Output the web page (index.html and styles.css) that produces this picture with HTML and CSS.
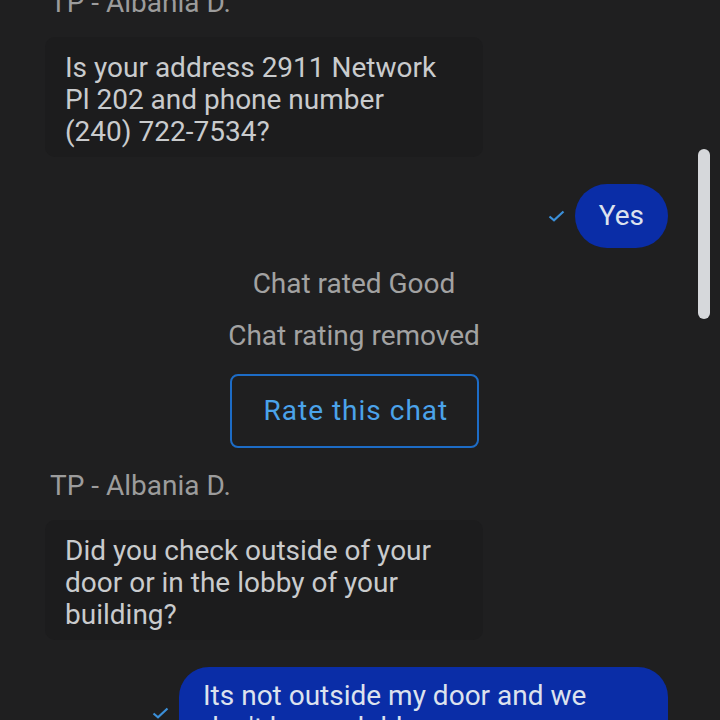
FILE: index.html
```html
<!DOCTYPE html>
<html lang="en">
<head>
<meta charset="utf-8">
<title>Chat</title>
<link rel="stylesheet" href="styles.css">
</head>
<body>
<div class="chat">
  <div class="name">TP - Albania D.</div>
  <div class="row agent"><div class="bubble-agent">Is your address 2911 Network Pl 202 and phone number (240) 722-7534?</div></div>
  <div class="row user first-user">
    <svg class="tick" width="17" height="12" viewBox="0 0 17 12"><polyline points="1.5,6.5 6,10.3 15.5,1.5" fill="none" stroke="#3b8fd8" stroke-width="2.2"/></svg>
    <div class="bubble-user short">Yes</div>
  </div>
  <div class="system rated">Chat rated Good</div>
  <div class="system removed">Chat rating removed</div>
  <div class="btn-row"><div class="rate-btn">Rate this chat</div></div>
  <div class="name name2">TP - Albania D.</div>
  <div class="row agent"><div class="bubble-agent">Did you check outside of your door or in the lobby of your building?</div></div>
  <div class="row user second-user">
    <svg class="tick" width="17" height="12" viewBox="0 0 17 12"><polyline points="1.5,6.5 6,10.3 15.5,1.5" fill="none" stroke="#3b8fd8" stroke-width="2.2"/></svg>
    <div class="bubble-user">Its not outside my door and we don't have a lobby</div>
  </div>
</div>
<div class="scrollbar"></div>
</body>
</html>
```
FILE: styles.css
```css
html, body {
  margin: 0;
  padding: 0;
  background: #1f1f20;
  height: 720px;
  overflow: hidden;
}
body {
  font-family: Roboto, "Liberation Sans", sans-serif;
  font-size: 28px;
  line-height: 32px;
  color: #c9cbcd;
  position: relative;
}
.chat {
  width: 708px;
  margin-top: -13px;
  display: flex;
  flex-direction: column;
}
.name {
  padding-left: 50px;
  color: #9c9c9c;
}
.name2 {
  margin-top: 22px;
}
.row {
  display: flex;
}
.agent {
  padding-left: 45px;
  margin-top: 18px;
}
.bubble-agent {
  width: 380px;
  background: #1c1c1d;
  border-radius: 10px;
  padding: 15px 38px 9px 20px;
  color: #c9cbcd;
}
.user {
  justify-content: flex-end;
  align-items: center;
  padding-right: 40px;
  gap: 10px;
}
.first-user {
  margin-top: 27px;
}
.second-user {
  margin-top: 27px;
}
.tick {
  display: block;
  flex: none;
}
.bubble-user {
  max-width: 441px;
  background: #0a2da7;
  color: #dce2ee;
  border-radius: 30px;
  padding: 13px 24px 15px 24px;
}
.bubble-user.short {
  padding: 16px 24px;
  border-radius: 32px;
}
.system {
  text-align: center;
  color: #a2a2a2;
  margin-top: 20px;
}
.btn-row {
  display: flex;
  justify-content: center;
  margin-top: 22px;
}
.rate-btn {
  border: 2px solid #1d6cc6;
  border-radius: 8px;
  padding: 19px 32px;
  color: #4ba3ea;
  width: 181px;
  text-align: center;
  white-space: nowrap;
  letter-spacing: 1px;
}
.scrollbar {
  position: absolute;
  left: 698px;
  top: 149px;
  width: 12px;
  height: 170px;
  border-radius: 6px;
  background: #d6d8db;
}
```
